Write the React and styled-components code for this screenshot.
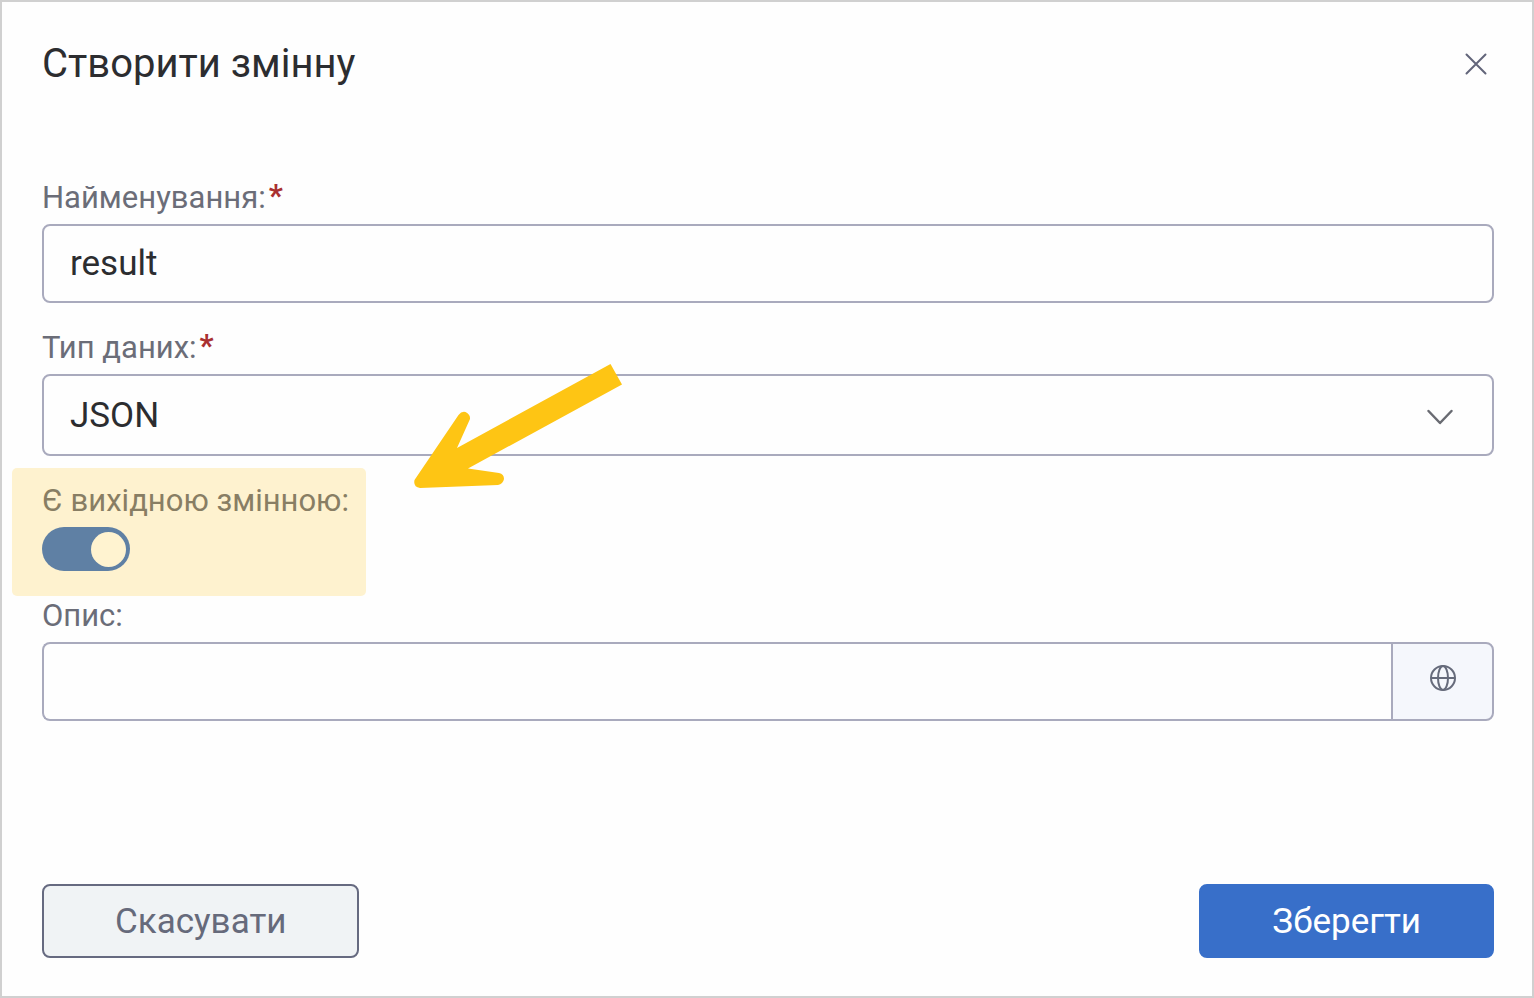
import React, { useState } from 'react';
import styled, { createGlobalStyle } from 'styled-components';

const GlobalStyle = createGlobalStyle`
  * {
    box-sizing: border-box;
  }

  body {
    margin: 0;
    background: #ffffff;
    font-family: Roboto, 'Noto Sans', sans-serif;
  }

  button, input, select {
    font-family: inherit;
  }
`;

const Dialog = styled.form`
  display: flex;
  flex-direction: column;
  min-height: 100vh;
  padding: 38px;
  border: 2px solid #d0d0d0;
  background: #fefefe;
`;

const Header = styled.header`
  display: flex;
  align-items: center;
  justify-content: space-between;
  height: 48px;
  padding: 0 2px;
  margin-bottom: 90px;
`;

const Title = styled.h1`
  margin: 0;
  color: #2c2d30;
  font-size: 40px;
  font-weight: 450;
  line-height: 50px;
`;

const CloseButton = styled.button`
  display: flex;
  padding: 4px;
  border: 0;
  background: none;
  color: #62657a;
`;

const Fields = styled.div`
  display: flex;
  flex-direction: column;
  gap: 25px;
  padding: 0 0 0 2px;
`;

const Field = styled.div`
  position: relative;
  display: flex;
  flex-direction: column;
  gap: 6px;
  align-self: ${({ $fit }) => ($fit ? 'flex-start' : 'stretch')};
`;

const Label = styled.label`
  color: #6b6d78;
  font-size: 31px;
  line-height: 40px;
`;

const Required = styled.span`
  margin-left: 3px;
  color: #a93030;
  font-weight: 700;
  line-height: 1;
  vertical-align: 2px;
`;

const TextInput = styled.input`
  width: 100%;
  height: 79px;
  padding: 0 26px;
  border: 2px solid #a9aabd;
  border-radius: 8px;
  background: #fefefe;
  color: #2c2d30;
  font-size: 35px;
  outline: none;
`;

const SelectWrap = styled.div`
  position: relative;
`;

const Select = styled.select`
  display: block;
  width: 100%;
  height: 82px;
  padding: 0 80px 0 26px;
  border: 2px solid #a9aabd;
  border-radius: 8px;
  background: #fefefe;
  color: #2c2d30;
  font-size: 35px;
  appearance: none;
  outline: none;
`;

const Chevron = styled.svg`
  position: absolute;
  top: 28px;
  right: 38px;
  pointer-events: none;
`;

const Highlight = styled.div`
  position: absolute;
  inset: -13px -17px -25px -30px;
  border-radius: 5px;
  background: rgba(255, 195, 20, 0.2);
  pointer-events: none;
`;

const Toggle = styled.input`
  display: flex;
  align-items: center;
  width: 88px;
  height: 44px;
  margin: 0;
  padding: 4px;
  border-radius: 22px;
  background: ${({ checked }) => (checked ? '#3870c9' : '#a9aabd')};
  appearance: none;

  &::before {
    content: '';
    width: 35px;
    height: 35px;
    margin-left: ${({ checked }) => (checked ? 'auto' : '0')};
    border-radius: 50%;
    background: #ffffff;
  }
`;

const InputGroup = styled.div`
  display: flex;

  ${TextInput} {
    flex: 1;
    min-width: 0;
    border-right: 0;
    border-radius: 8px 0 0 8px;
  }
`;

const LocaleButton = styled.button`
  display: flex;
  align-items: center;
  justify-content: center;
  width: 103px;
  padding: 0 0 8px;
  border: 2px solid #a9aabd;
  border-radius: 0 8px 8px 0;
  background: #f5f7fc;
  color: #666b7b;
`;

const Arrow = styled.svg`
  position: absolute;
  top: 34px;
  left: 370px;
  pointer-events: none;
`;

const Footer = styled.footer`
  display: flex;
  justify-content: space-between;
  margin-top: auto;
  padding-left: 2px;
`;

const Button = styled.button`
  height: 74px;
  padding: 0 71px;
  border: 2px solid ${({ $primary }) => ($primary ? '#386fc9' : '#666a80')};
  border-radius: 8px;
  background: ${({ $primary }) => ($primary ? '#386fc9' : '#f0f3f5')};
  color: ${({ $primary }) => ($primary ? '#ffffff' : '#666a7b')};
  font-size: 35px;
  font-weight: 450;
`;

const App = () => {
    const [name, setName] = useState('result');
    const [isOutput, setIsOutput] = useState(true);
    const [description, setDescription] = useState('');

    return (
        <>
            <GlobalStyle />
            <Dialog onSubmit={(e) => e.preventDefault()}>
                <Header>
                    <Title>Створити змінну</Title>
                    <CloseButton type="button" aria-label="Закрити">
                        <svg width="24" height="24" viewBox="0 0 24 24" fill="none" stroke="currentColor" strokeWidth="2" strokeLinecap="round">
                            <path d="M2.5 2.5 21.5 21.5M21.5 2.5 2.5 21.5" />
                        </svg>
                    </CloseButton>
                </Header>
                <Fields>
                    <Field>
                        <Label htmlFor="name">Найменування:<Required>*</Required></Label>
                        <TextInput id="name" value={name} onChange={(e) => setName(e.target.value)} />
                    </Field>
                    <Field>
                        <Label htmlFor="type">Тип даних:<Required>*</Required></Label>
                        <SelectWrap>
                            <Select id="type" defaultValue="JSON">
                                <option>JSON</option>
                            </Select>
                            <Chevron width="32" height="28" viewBox="0 0 32 28" fill="none" stroke="#696b72" strokeWidth="2.5" strokeLinecap="round" strokeLinejoin="round">
                                <path d="M4.5 9 16 21 27.500 9" />
                            </Chevron>
                        </SelectWrap>
                        <Arrow width="212" height="128" viewBox="412 362 212 128" fill="#fec514">
                            <path d="M610.500 364 622 384.500 468 468.500 499 473Q504 474 504 479Q503 484 498 485L420 488Q413 487 414.500 480L458.500 415Q461.500 411 465.500 412Q470.500 414.500 470 419L457 448Z" />
                        </Arrow>
                    </Field>
                    <Field $fit>
                        <Label htmlFor="output">Є вихідною змінною:</Label>
                        <Toggle id="output" type="checkbox" role="switch" checked={isOutput} onChange={(e) => setIsOutput(e.target.checked)} />
                        <Highlight />
                    </Field>
                    <Field>
                        <Label htmlFor="description">Опис:</Label>
                        <InputGroup>
                            <TextInput id="description" value={description} onChange={(e) => setDescription(e.target.value)} />
                            <LocaleButton type="button" aria-label="Мова">
                                <svg width="28" height="28" viewBox="0 0 28 28" fill="none" stroke="currentColor" strokeWidth="2">
                                    <circle cx="14" cy="14" r="12" />
                                    <ellipse cx="14" cy="14" rx="5" ry="12" />
                                    <path d="M2 14h24" />
                                </svg>
                            </LocaleButton>
                        </InputGroup>
                    </Field>
                </Fields>
                <Footer>
                    <Button type="button">Скасувати</Button>
                    <Button type="submit" $primary>Зберегти</Button>
                </Footer>
            </Dialog>
        </>
    );
};

export default App;
